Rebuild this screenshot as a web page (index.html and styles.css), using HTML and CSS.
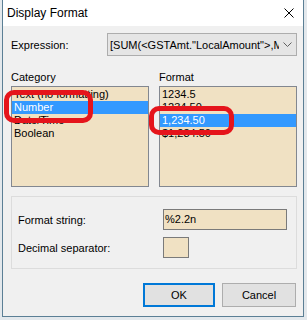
FILE: index.html
```html
<!DOCTYPE html>
<html lang="en">
<head>
  <meta charset="UTF-8">
  <title>Display Format</title>
  <link rel="stylesheet" href="styles.css">
</head>
<body>

<div class="window">
  <div class="titlebar">
    <span class="title">Display Format</span>
    <svg class="close" width="10" height="10" viewBox="0 0 10 10">
      <path d="M0.5 0.5 L9.5 9.5 M9.5 0.5 L0.5 9.5" stroke="#000" stroke-width="1" fill="none"/>
    </svg>
  </div>

  <div class="client">
    <div class="expr-row">
      <span class="expr-label">Expression:</span>
      <div class="combo">
        <span class="combo-text">[SUM(&lt;GSTAmt."LocalAmount"&gt;,MAX(&lt;GSTAmt."Rate"&gt;))]</span>
        <span class="combo-arrow">
          <svg width="9" height="5" viewBox="0 0 9 5">
            <path d="M0.5 0.5 L4.5 4.5 L8.5 0.5" stroke="#606060" stroke-width="1" fill="none"/>
          </svg>
        </span>
      </div>
    </div>

    <div class="lists">
      <div class="col">
        <div class="caption">Category</div>
        <ul class="listbox">
          <li>Text (no formatting)</li>
          <li class="sel">Number</li>
          <li>Date/Time</li>
          <li>Boolean</li>
        </ul>
      </div>
      <div class="col">
        <div class="caption">Format</div>
        <ul class="listbox">
          <li>1234.5</li>
          <li>1234.50</li>
          <li class="sel">1,234.50</li>
          <li>$1,234.50</li>
        </ul>
      </div>
    </div>

    <div class="group">
      <div class="field-row">
        <span class="field-label">Format string:</span>
        <div class="edit">%2.2n</div>
      </div>
      <div class="field-row">
        <span class="field-label">Decimal separator:</span>
        <div class="edit small"></div>
      </div>
    </div>

    <div class="buttons">
      <button class="ok">OK</button>
      <button class="cancel">Cancel</button>
    </div>
  </div>
</div>

<div class="mark mark-category"></div>
<div class="mark mark-format"></div>

</body>
</html>
```

FILE: styles.css
```css
body {
  margin: 0;
  width: 307px;
  height: 320px;
  overflow: hidden;
  position: relative;
  background-color: #e3e8ec;
  font-family: "Liberation Sans", Arial, sans-serif;
  font-size: 11px;
  color: #000;
}
.window {
  margin-left: 2px;
  width: 300px;
  height: 316px;
  border: 1px solid #5b7f95;
  border-top: none;
  background-color: #f0f0f0;
}
.titlebar {
  height: 26px;
  background-color: #fff;
  display: flex;
  align-items: center;
  justify-content: space-between;
  padding: 0 9px 0 4px;
}
.title {
  font-size: 12px;
}
.client {
  padding: 7px 0 0 8px;
}
.expr-row {
  display: flex;
  align-items: center;
  height: 23px;
}
.expr-label {
  width: 96px;
}
.combo {
  box-sizing: border-box;
  width: 190px;
  height: 23px;
  border: 1px solid #adadad;
  background-color: #e5e5e5;
  display: flex;
  align-items: center;
  padding-left: 2px;
}
.combo-text {
  flex: 1;
  overflow: hidden;
  white-space: nowrap;
}
.combo-arrow {
  width: 17px;
  display: flex;
  justify-content: center;
}
.lists {
  display: flex;
  gap: 10px;
  margin-top: 15px;
}
.caption {
  line-height: 13px;
  margin-bottom: 2px;
}
.listbox {
  box-sizing: border-box;
  width: 138px;
  height: 101px;
  margin: 0;
  padding: 1px 0 0;
  list-style: none;
  border: 1px solid #828790;
  background-color: #f0e1c3;
}
.listbox li {
  height: 13px;
  line-height: 13px;
  padding-left: 2px;
  white-space: nowrap;
}
.listbox .sel {
  background-color: #3399ff;
  color: #fff;
}
.group {
  box-sizing: border-box;
  width: 286px;
  height: 73px;
  margin-top: 9px;
  border: 1px solid #dcdcdc;
  padding: 12px 0 0 6px;
}
.field-row {
  display: flex;
  align-items: center;
  height: 21px;
  margin-bottom: 7px;
}
.field-label {
  width: 145px;
}
.edit {
  box-sizing: border-box;
  width: 124px;
  height: 21px;
  line-height: 19px;
  padding-left: 1px;
  border: 1px solid #7a7a7a;
  background-color: #f0e1c3;
}
.edit.small {
  width: 26px;
}
.buttons {
  display: flex;
  justify-content: flex-end;
  gap: 7px;
  width: 285px;
  margin-top: 14px;
}
button {
  box-sizing: border-box;
  height: 24px;
  padding: 0;
  font: inherit;
  color: #000;
  background-color: #e1e1e1;
  border: 1px solid #adadad;
}
.ok {
  width: 72px;
  border: 2px solid #0078d7;
}
.cancel {
  width: 74px;
}
.mark {
  position: absolute;
  box-sizing: border-box;
  border: 5px solid #e5141b;
  border-radius: 10px;
}
.mark-category {
  left: 4px;
  top: 90px;
  width: 89px;
  height: 33px;
}
.mark-format {
  left: 149px;
  top: 106px;
  width: 85px;
  height: 29px;
}
```
